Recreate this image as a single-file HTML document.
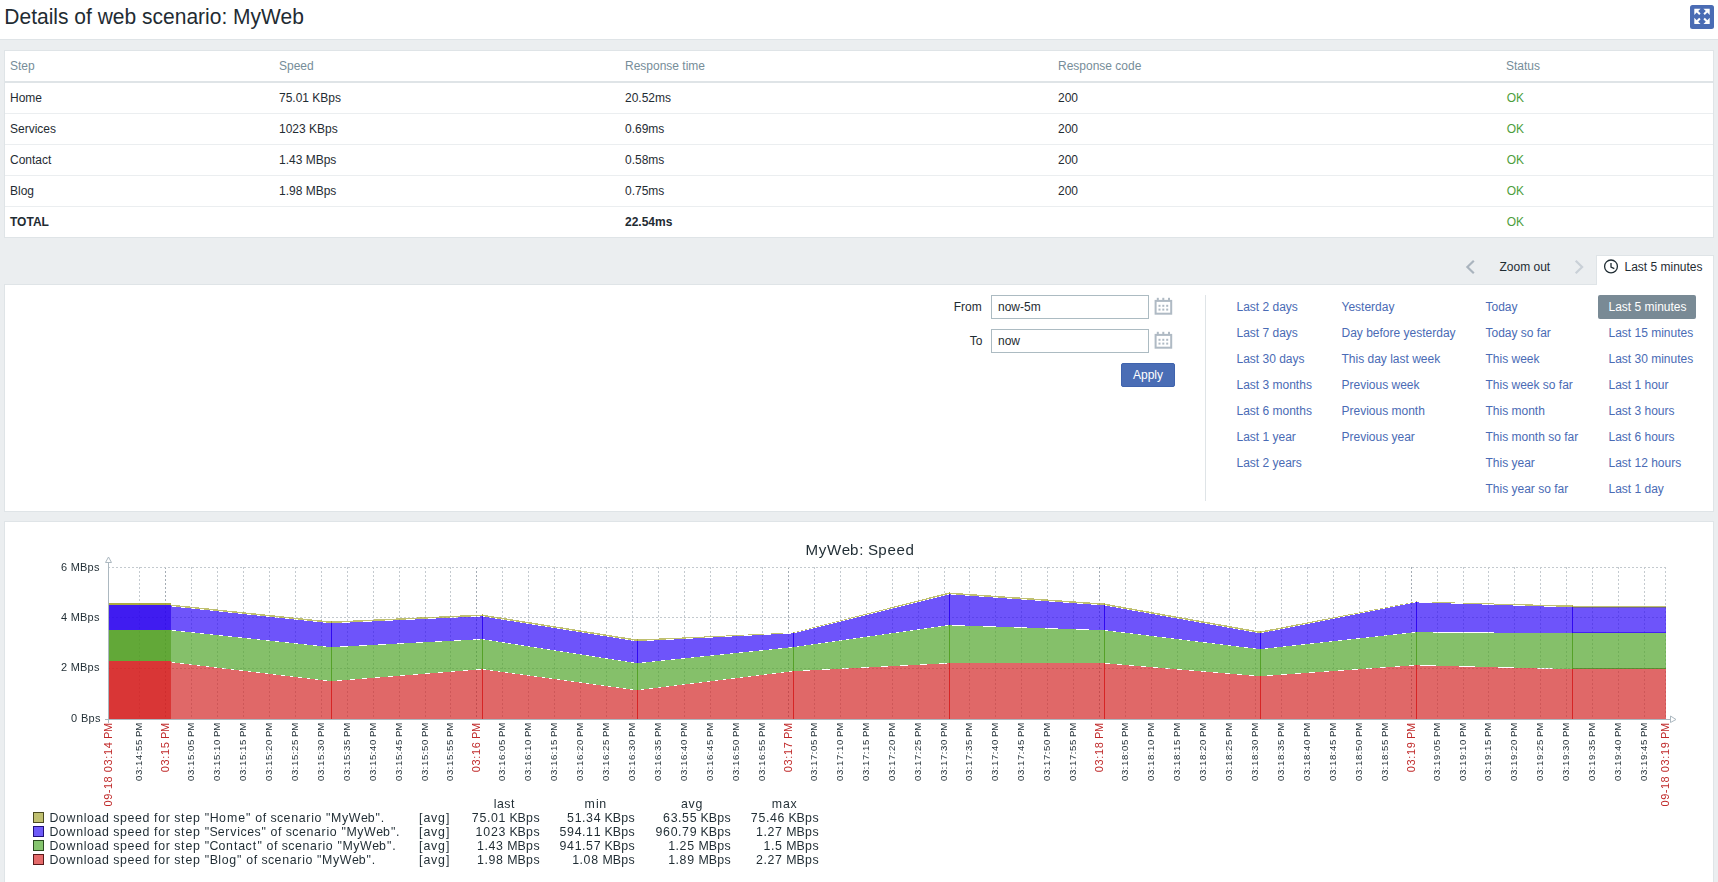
<!DOCTYPE html><html><head><meta charset="utf-8"><title>Details of web scenario: MyWeb</title><style>
*{box-sizing:border-box}
html,body{margin:0;padding:0}
body{width:1718px;height:882px;overflow:hidden;position:relative;background:#ebeef0;font-family:"Liberation Sans",sans-serif;font-size:12px;color:#1f2c33}
.a{position:absolute}
.hdr{left:0;top:0;width:1718px;height:40px;background:#fff;border-bottom:1px solid #dfe4e7}
.h1{left:4.3px;top:4.6px;transform:scaleY(1.075);transform-origin:0 20px;font-size:21px;line-height:24px;white-space:nowrap;color:#1f2c33}
.pnl{background:#fff;border:1px solid #dfe4e7}
.tx{white-space:nowrap;line-height:30px;height:30px}
.th{color:#768d99}
.ok{color:#4c9e3c}
.lnk{color:#4a6bb5;white-space:nowrap;line-height:14px}
</style></head><body>
<div class="a hdr"></div>
<div class="a h1">Details of web scenario: MyWeb</div>
<svg class="a" style="left:1690px;top:5px" width="24" height="24" viewBox="0 0 24 24"><rect x="0" y="0" width="24" height="24" rx="2.5" fill="#4a6cb4"/><g fill="#fff" transform="translate(4.3,3.7)"><polygon points="0.00,0.00 6.30,0.00 3.90,2.40 6.30,4.90 4.90,6.30 2.40,3.90 0.00,6.30"/><polygon points="15.40,0.00 9.10,0.00 11.50,2.40 9.10,4.90 10.50,6.30 13.00,3.90 15.40,6.30"/><polygon points="0.00,15.40 6.30,15.40 3.90,13.00 6.30,10.50 4.90,9.10 2.40,11.50 0.00,9.10"/><polygon points="15.40,15.40 9.10,15.40 11.50,13.00 9.10,10.50 10.50,9.10 13.00,11.50 15.40,9.10"/></g></svg>
<div class="a pnl" style="left:4px;top:50px;width:1710px;height:188px"></div>
<div class="a" style="left:5px;top:81px;width:1708px;height:2px;background:#dfe4e7"></div>
<div class="a" style="left:5px;top:113px;width:1708px;height:1px;background:#ebeef0"></div>
<div class="a" style="left:5px;top:144px;width:1708px;height:1px;background:#ebeef0"></div>
<div class="a" style="left:5px;top:175px;width:1708px;height:1px;background:#ebeef0"></div>
<div class="a" style="left:5px;top:206px;width:1708px;height:1px;background:#ebeef0"></div>
<div class="a tx th" style="left:10px;top:51px">Step</div>
<div class="a tx th" style="left:279px;top:51px">Speed</div>
<div class="a tx th" style="left:625px;top:51px">Response time</div>
<div class="a tx th" style="left:1058px;top:51px">Response code</div>
<div class="a tx th" style="left:1506px;top:51px">Status</div>
<div class="a tx" style="left:10px;top:83px">Home</div>
<div class="a tx" style="left:279px;top:83px">75.01 KBps</div>
<div class="a tx" style="left:625px;top:83px">20.52ms</div>
<div class="a tx" style="left:1058px;top:83px">200</div>
<div class="a tx ok" style="left:1506.7px;top:83px">OK</div>
<div class="a tx" style="left:10px;top:114px">Services</div>
<div class="a tx" style="left:279px;top:114px">1023 KBps</div>
<div class="a tx" style="left:625px;top:114px">0.69ms</div>
<div class="a tx" style="left:1058px;top:114px">200</div>
<div class="a tx ok" style="left:1506.7px;top:114px">OK</div>
<div class="a tx" style="left:10px;top:145px">Contact</div>
<div class="a tx" style="left:279px;top:145px">1.43 MBps</div>
<div class="a tx" style="left:625px;top:145px">0.58ms</div>
<div class="a tx" style="left:1058px;top:145px">200</div>
<div class="a tx ok" style="left:1506.7px;top:145px">OK</div>
<div class="a tx" style="left:10px;top:176px">Blog</div>
<div class="a tx" style="left:279px;top:176px">1.98 MBps</div>
<div class="a tx" style="left:625px;top:176px">0.75ms</div>
<div class="a tx" style="left:1058px;top:176px">200</div>
<div class="a tx ok" style="left:1506.7px;top:176px">OK</div>
<div class="a tx" style="left:10px;top:207px;font-weight:bold">TOTAL</div>
<div class="a tx" style="left:625px;top:207px;font-weight:bold">22.54ms</div>
<div class="a tx ok" style="left:1506.7px;top:207px">OK</div>
<div class="a pnl" style="left:4px;top:284px;width:1710px;height:228px"></div>
<div class="a" style="left:1596px;top:255px;width:118px;height:30px;background:#fff;border:1px solid #dfe4e7;border-bottom:0"></div>
<svg class="a" style="left:1462px;top:258px" width="18" height="18"><polyline points="11.8,2.8 5.4,9 11.8,15.2" fill="none" stroke="#aab4be" stroke-width="2.2"/></svg>
<svg class="a" style="left:1570px;top:258px" width="18" height="18"><polyline points="5.7,2.8 12.1,9 5.7,15.2" fill="none" stroke="#c9d0d7" stroke-width="2.2"/></svg>
<div class="a" style="left:1499.5px;top:260px;line-height:14px;white-space:nowrap">Zoom out</div>
<svg class="a" style="left:1603px;top:258px" width="17" height="17"><circle cx="8" cy="8.4" r="6.4" fill="none" stroke="#1f2c33" stroke-width="1.3"/><polyline points="8,5 8,9 11.3,10.6" fill="none" stroke="#1f2c33" stroke-width="1.3"/></svg>
<div class="a" style="left:1624.5px;top:260px;line-height:14px;white-space:nowrap">Last 5 minutes</div>
<div class="a" style="left:953.7px;top:300px;line-height:14px">From</div>
<div class="a" style="left:969.7px;top:334px;line-height:14px">To</div>
<div class="a" style="left:991px;top:295px;width:158px;height:24px;border:1px solid #acbbc2;background:#fff;padding-left:6px;line-height:22px">now-5m</div>
<svg class="a" style="left:1153px;top:296px" width="22" height="22" viewBox="0 0 22 22" fill="#afbac4"><rect x="2.6" y="4.9" width="15.6" height="12.8" fill="none" stroke="#afbac4" stroke-width="2"/><rect x="3.8" y="1.8" width="2" height="2.4"/><rect x="9.3" y="1.8" width="2" height="2.4"/><rect x="15" y="1.8" width="2" height="2.4"/><rect x="5.5" y="8.8" width="2" height="2"/><rect x="9.3" y="8.8" width="2" height="2"/><rect x="13.2" y="8.8" width="2" height="2"/><rect x="5.5" y="12.6" width="2" height="2"/><rect x="9.3" y="12.6" width="2" height="2"/><rect x="13.2" y="12.6" width="2" height="2"/></svg>
<div class="a" style="left:991px;top:329px;width:158px;height:24px;border:1px solid #acbbc2;background:#fff;padding-left:6px;line-height:22px">now</div>
<svg class="a" style="left:1153px;top:330px" width="22" height="22" viewBox="0 0 22 22" fill="#afbac4"><rect x="2.6" y="4.9" width="15.6" height="12.8" fill="none" stroke="#afbac4" stroke-width="2"/><rect x="3.8" y="1.8" width="2" height="2.4"/><rect x="9.3" y="1.8" width="2" height="2.4"/><rect x="15" y="1.8" width="2" height="2.4"/><rect x="5.5" y="8.8" width="2" height="2"/><rect x="9.3" y="8.8" width="2" height="2"/><rect x="13.2" y="8.8" width="2" height="2"/><rect x="5.5" y="12.6" width="2" height="2"/><rect x="9.3" y="12.6" width="2" height="2"/><rect x="13.2" y="12.6" width="2" height="2"/></svg>
<div class="a" style="left:1121px;top:363px;width:54px;height:24px;background:#4a6db5;border:1px solid #3f63ad;border-radius:2px;color:#fff;text-align:center;line-height:22px">Apply</div>
<div class="a" style="left:1205px;top:295px;width:1px;height:206px;background:#dfe4e7"></div>
<div class="a" style="left:1598px;top:295px;width:98px;height:24px;background:#798a95;border-radius:2px"></div>
<div class="a lnk" style="left:1236.5px;top:300px;color:#4a6bb5">Last 2 days</div>
<div class="a lnk" style="left:1236.5px;top:326px;color:#4a6bb5">Last 7 days</div>
<div class="a lnk" style="left:1236.5px;top:352px;color:#4a6bb5">Last 30 days</div>
<div class="a lnk" style="left:1236.5px;top:378px;color:#4a6bb5">Last 3 months</div>
<div class="a lnk" style="left:1236.5px;top:404px;color:#4a6bb5">Last 6 months</div>
<div class="a lnk" style="left:1236.5px;top:430px;color:#4a6bb5">Last 1 year</div>
<div class="a lnk" style="left:1236.5px;top:456px;color:#4a6bb5">Last 2 years</div>
<div class="a lnk" style="left:1341.5px;top:300px;color:#4a6bb5">Yesterday</div>
<div class="a lnk" style="left:1341.5px;top:326px;color:#4a6bb5">Day before yesterday</div>
<div class="a lnk" style="left:1341.5px;top:352px;color:#4a6bb5">This day last week</div>
<div class="a lnk" style="left:1341.5px;top:378px;color:#4a6bb5">Previous week</div>
<div class="a lnk" style="left:1341.5px;top:404px;color:#4a6bb5">Previous month</div>
<div class="a lnk" style="left:1341.5px;top:430px;color:#4a6bb5">Previous year</div>
<div class="a lnk" style="left:1485.5px;top:300px;color:#4a6bb5">Today</div>
<div class="a lnk" style="left:1485.5px;top:326px;color:#4a6bb5">Today so far</div>
<div class="a lnk" style="left:1485.5px;top:352px;color:#4a6bb5">This week</div>
<div class="a lnk" style="left:1485.5px;top:378px;color:#4a6bb5">This week so far</div>
<div class="a lnk" style="left:1485.5px;top:404px;color:#4a6bb5">This month</div>
<div class="a lnk" style="left:1485.5px;top:430px;color:#4a6bb5">This month so far</div>
<div class="a lnk" style="left:1485.5px;top:456px;color:#4a6bb5">This year</div>
<div class="a lnk" style="left:1485.5px;top:482px;color:#4a6bb5">This year so far</div>
<div class="a lnk" style="left:1608.5px;top:300px;color:#fff">Last 5 minutes</div>
<div class="a lnk" style="left:1608.5px;top:326px;color:#4a6bb5">Last 15 minutes</div>
<div class="a lnk" style="left:1608.5px;top:352px;color:#4a6bb5">Last 30 minutes</div>
<div class="a lnk" style="left:1608.5px;top:378px;color:#4a6bb5">Last 1 hour</div>
<div class="a lnk" style="left:1608.5px;top:404px;color:#4a6bb5">Last 3 hours</div>
<div class="a lnk" style="left:1608.5px;top:430px;color:#4a6bb5">Last 6 hours</div>
<div class="a lnk" style="left:1608.5px;top:456px;color:#4a6bb5">Last 12 hours</div>
<div class="a lnk" style="left:1608.5px;top:482px;color:#4a6bb5">Last 1 day</div>
<div class="a pnl" style="left:4px;top:521px;width:1710px;height:400px"></div>
<svg class="a" style="left:0;top:521px" width="1718" height="361" viewBox="0 521 1718 361" shape-rendering="crispEdges">
<line x1="139.5" y1="567" x2="139.5" y2="719" stroke="#c4cacf" stroke-width="1" stroke-dasharray="2,2"/>
<line x1="165.5" y1="567" x2="165.5" y2="719" stroke="#a4acb4" stroke-width="1" stroke-dasharray="2,2"/>
<line x1="191.5" y1="567" x2="191.5" y2="719" stroke="#c4cacf" stroke-width="1" stroke-dasharray="2,2"/>
<line x1="217.5" y1="567" x2="217.5" y2="719" stroke="#c4cacf" stroke-width="1" stroke-dasharray="2,2"/>
<line x1="243.5" y1="567" x2="243.5" y2="719" stroke="#c4cacf" stroke-width="1" stroke-dasharray="2,2"/>
<line x1="269.5" y1="567" x2="269.5" y2="719" stroke="#c4cacf" stroke-width="1" stroke-dasharray="2,2"/>
<line x1="295.5" y1="567" x2="295.5" y2="719" stroke="#c4cacf" stroke-width="1" stroke-dasharray="2,2"/>
<line x1="321.5" y1="567" x2="321.5" y2="719" stroke="#c4cacf" stroke-width="1" stroke-dasharray="2,2"/>
<line x1="347.5" y1="567" x2="347.5" y2="719" stroke="#c4cacf" stroke-width="1" stroke-dasharray="2,2"/>
<line x1="373.5" y1="567" x2="373.5" y2="719" stroke="#c4cacf" stroke-width="1" stroke-dasharray="2,2"/>
<line x1="399.5" y1="567" x2="399.5" y2="719" stroke="#c4cacf" stroke-width="1" stroke-dasharray="2,2"/>
<line x1="425.5" y1="567" x2="425.5" y2="719" stroke="#c4cacf" stroke-width="1" stroke-dasharray="2,2"/>
<line x1="450.5" y1="567" x2="450.5" y2="719" stroke="#c4cacf" stroke-width="1" stroke-dasharray="2,2"/>
<line x1="476.5" y1="567" x2="476.5" y2="719" stroke="#a4acb4" stroke-width="1" stroke-dasharray="2,2"/>
<line x1="502.5" y1="567" x2="502.5" y2="719" stroke="#c4cacf" stroke-width="1" stroke-dasharray="2,2"/>
<line x1="528.5" y1="567" x2="528.5" y2="719" stroke="#c4cacf" stroke-width="1" stroke-dasharray="2,2"/>
<line x1="554.5" y1="567" x2="554.5" y2="719" stroke="#c4cacf" stroke-width="1" stroke-dasharray="2,2"/>
<line x1="580.5" y1="567" x2="580.5" y2="719" stroke="#c4cacf" stroke-width="1" stroke-dasharray="2,2"/>
<line x1="606.5" y1="567" x2="606.5" y2="719" stroke="#c4cacf" stroke-width="1" stroke-dasharray="2,2"/>
<line x1="632.5" y1="567" x2="632.5" y2="719" stroke="#c4cacf" stroke-width="1" stroke-dasharray="2,2"/>
<line x1="658.5" y1="567" x2="658.5" y2="719" stroke="#c4cacf" stroke-width="1" stroke-dasharray="2,2"/>
<line x1="684.5" y1="567" x2="684.5" y2="719" stroke="#c4cacf" stroke-width="1" stroke-dasharray="2,2"/>
<line x1="710.5" y1="567" x2="710.5" y2="719" stroke="#c4cacf" stroke-width="1" stroke-dasharray="2,2"/>
<line x1="736.5" y1="567" x2="736.5" y2="719" stroke="#c4cacf" stroke-width="1" stroke-dasharray="2,2"/>
<line x1="762.5" y1="567" x2="762.5" y2="719" stroke="#c4cacf" stroke-width="1" stroke-dasharray="2,2"/>
<line x1="788.5" y1="567" x2="788.5" y2="719" stroke="#a4acb4" stroke-width="1" stroke-dasharray="2,2"/>
<line x1="814.5" y1="567" x2="814.5" y2="719" stroke="#c4cacf" stroke-width="1" stroke-dasharray="2,2"/>
<line x1="840.5" y1="567" x2="840.5" y2="719" stroke="#c4cacf" stroke-width="1" stroke-dasharray="2,2"/>
<line x1="866.5" y1="567" x2="866.5" y2="719" stroke="#c4cacf" stroke-width="1" stroke-dasharray="2,2"/>
<line x1="892.5" y1="567" x2="892.5" y2="719" stroke="#c4cacf" stroke-width="1" stroke-dasharray="2,2"/>
<line x1="918.5" y1="567" x2="918.5" y2="719" stroke="#c4cacf" stroke-width="1" stroke-dasharray="2,2"/>
<line x1="944.5" y1="567" x2="944.5" y2="719" stroke="#c4cacf" stroke-width="1" stroke-dasharray="2,2"/>
<line x1="969.5" y1="567" x2="969.5" y2="719" stroke="#c4cacf" stroke-width="1" stroke-dasharray="2,2"/>
<line x1="995.5" y1="567" x2="995.5" y2="719" stroke="#c4cacf" stroke-width="1" stroke-dasharray="2,2"/>
<line x1="1021.5" y1="567" x2="1021.5" y2="719" stroke="#c4cacf" stroke-width="1" stroke-dasharray="2,2"/>
<line x1="1047.5" y1="567" x2="1047.5" y2="719" stroke="#c4cacf" stroke-width="1" stroke-dasharray="2,2"/>
<line x1="1073.5" y1="567" x2="1073.5" y2="719" stroke="#c4cacf" stroke-width="1" stroke-dasharray="2,2"/>
<line x1="1099.5" y1="567" x2="1099.5" y2="719" stroke="#a4acb4" stroke-width="1" stroke-dasharray="2,2"/>
<line x1="1125.5" y1="567" x2="1125.5" y2="719" stroke="#c4cacf" stroke-width="1" stroke-dasharray="2,2"/>
<line x1="1151.5" y1="567" x2="1151.5" y2="719" stroke="#c4cacf" stroke-width="1" stroke-dasharray="2,2"/>
<line x1="1177.5" y1="567" x2="1177.5" y2="719" stroke="#c4cacf" stroke-width="1" stroke-dasharray="2,2"/>
<line x1="1203.5" y1="567" x2="1203.5" y2="719" stroke="#c4cacf" stroke-width="1" stroke-dasharray="2,2"/>
<line x1="1229.5" y1="567" x2="1229.5" y2="719" stroke="#c4cacf" stroke-width="1" stroke-dasharray="2,2"/>
<line x1="1255.5" y1="567" x2="1255.5" y2="719" stroke="#c4cacf" stroke-width="1" stroke-dasharray="2,2"/>
<line x1="1281.5" y1="567" x2="1281.5" y2="719" stroke="#c4cacf" stroke-width="1" stroke-dasharray="2,2"/>
<line x1="1307.5" y1="567" x2="1307.5" y2="719" stroke="#c4cacf" stroke-width="1" stroke-dasharray="2,2"/>
<line x1="1333.5" y1="567" x2="1333.5" y2="719" stroke="#c4cacf" stroke-width="1" stroke-dasharray="2,2"/>
<line x1="1359.5" y1="567" x2="1359.5" y2="719" stroke="#c4cacf" stroke-width="1" stroke-dasharray="2,2"/>
<line x1="1385.5" y1="567" x2="1385.5" y2="719" stroke="#c4cacf" stroke-width="1" stroke-dasharray="2,2"/>
<line x1="1411.5" y1="567" x2="1411.5" y2="719" stroke="#a4acb4" stroke-width="1" stroke-dasharray="2,2"/>
<line x1="1437.5" y1="567" x2="1437.5" y2="719" stroke="#c4cacf" stroke-width="1" stroke-dasharray="2,2"/>
<line x1="1463.5" y1="567" x2="1463.5" y2="719" stroke="#c4cacf" stroke-width="1" stroke-dasharray="2,2"/>
<line x1="1488.5" y1="567" x2="1488.5" y2="719" stroke="#c4cacf" stroke-width="1" stroke-dasharray="2,2"/>
<line x1="1514.5" y1="567" x2="1514.5" y2="719" stroke="#c4cacf" stroke-width="1" stroke-dasharray="2,2"/>
<line x1="1540.5" y1="567" x2="1540.5" y2="719" stroke="#c4cacf" stroke-width="1" stroke-dasharray="2,2"/>
<line x1="1566.5" y1="567" x2="1566.5" y2="719" stroke="#c4cacf" stroke-width="1" stroke-dasharray="2,2"/>
<line x1="1592.5" y1="567" x2="1592.5" y2="719" stroke="#c4cacf" stroke-width="1" stroke-dasharray="2,2"/>
<line x1="1618.5" y1="567" x2="1618.5" y2="719" stroke="#c4cacf" stroke-width="1" stroke-dasharray="2,2"/>
<line x1="1644.5" y1="567" x2="1644.5" y2="719" stroke="#c4cacf" stroke-width="1" stroke-dasharray="2,2"/>
<line x1="1665.5" y1="567" x2="1665.5" y2="719" stroke="#c4cacf" stroke-width="1" stroke-dasharray="2,2"/>
<line x1="108" y1="567.5" x2="1666" y2="567.5" stroke="#c4cacf" stroke-width="1" stroke-dasharray="2,2"/>
<line x1="108" y1="617.5" x2="1666" y2="617.5" stroke="#c4cacf" stroke-width="1" stroke-dasharray="2,2"/>
<line x1="108" y1="668.5" x2="1666" y2="668.5" stroke="#c4cacf" stroke-width="1" stroke-dasharray="2,2"/>
<polygon points="171,662.4 331,681.4 482,669.4 637,690.4 793,671.4 949,663.4 1104,663.4 1260,676.4 1416,665.4 1572,669.4 1666,669.4 1666,719 171,719" fill="#d11e1e" fill-opacity="0.67"/>
<polygon points="171,630.4 331,647.4 482,639.4 637,663.4 793,647.4 949,625.4 1104,630.4 1260,649.4 1416,632.4 1572,633.4 1666,633.4 1666,669 1572,669 1416,665 1260,676 1104,663 949,663 793,671 637,690 482,669 331,681 171,662" fill="#49a121" fill-opacity="0.67"/>
<polygon points="171,606.4 331,623.4 482,616.4 637,641.4 793,633.4 949,594.4 1104,605.4 1260,633.4 1416,602.4 1572,607.4 1666,607.4 1666,633 1572,633 1416,632 1260,649 1104,630 949,625 793,647 637,663 482,639 331,647 171,630" fill="#2700f8" fill-opacity="0.67"/>
<polygon points="171,604.5 331,621.5 482,614.5 637,639.5 793,632.5 949,592.5 1104,603.5 1260,631.5 1416,601.5 1572,605.5 1666,605.5 1666,607 1572,607 1416,602 1260,633 1104,605 949,594 793,633 637,641 482,616 331,623 171,606" fill="#a1a12a" fill-opacity="0.67"/>
<rect x="108" y="603" width="63" height="2" fill="#a2a229" fill-opacity="0.891"/>
<rect x="108" y="605" width="63" height="25" fill="#2900ee" fill-opacity="0.891"/>
<rect x="108" y="630" width="63" height="31" fill="#4f9d1f" fill-opacity="0.891"/>
<rect x="108" y="661" width="63" height="58" fill="#d41d1d" fill-opacity="0.891"/>
<rect x="1572" y="607" width="94" height="1" fill="#6a6a40" fill-opacity="0.5"/>
<rect x="1572" y="632" width="94" height="1" fill="#2900ee" fill-opacity="0.6"/>
<rect x="1572" y="668" width="94" height="1" fill="#4a7a20" fill-opacity="0.7"/>
<rect x="331" y="621" width="1" height="2" fill="#a2a229" fill-opacity="0.891"/>
<rect x="331" y="623" width="1" height="24" fill="#2900ee" fill-opacity="0.891"/>
<rect x="331" y="647" width="1" height="34" fill="#4f9d1f" fill-opacity="0.891"/>
<rect x="331" y="681" width="1" height="38" fill="#d41d1d" fill-opacity="0.891"/>
<rect x="482" y="614" width="1" height="2" fill="#a2a229" fill-opacity="0.891"/>
<rect x="482" y="616" width="1" height="23" fill="#2900ee" fill-opacity="0.891"/>
<rect x="482" y="639" width="1" height="30" fill="#4f9d1f" fill-opacity="0.891"/>
<rect x="482" y="669" width="1" height="50" fill="#d41d1d" fill-opacity="0.891"/>
<rect x="637" y="639" width="1" height="2" fill="#a2a229" fill-opacity="0.891"/>
<rect x="637" y="641" width="1" height="22" fill="#2900ee" fill-opacity="0.891"/>
<rect x="637" y="663" width="1" height="27" fill="#4f9d1f" fill-opacity="0.891"/>
<rect x="637" y="690" width="1" height="29" fill="#d41d1d" fill-opacity="0.891"/>
<rect x="793" y="632" width="1" height="1" fill="#a2a229" fill-opacity="0.891"/>
<rect x="793" y="633" width="1" height="14" fill="#2900ee" fill-opacity="0.891"/>
<rect x="793" y="647" width="1" height="24" fill="#4f9d1f" fill-opacity="0.891"/>
<rect x="793" y="671" width="1" height="48" fill="#d41d1d" fill-opacity="0.891"/>
<rect x="949" y="592" width="1" height="2" fill="#a2a229" fill-opacity="0.891"/>
<rect x="949" y="594" width="1" height="31" fill="#2900ee" fill-opacity="0.891"/>
<rect x="949" y="625" width="1" height="38" fill="#4f9d1f" fill-opacity="0.891"/>
<rect x="949" y="663" width="1" height="56" fill="#d41d1d" fill-opacity="0.891"/>
<rect x="1104" y="603" width="1" height="2" fill="#a2a229" fill-opacity="0.891"/>
<rect x="1104" y="605" width="1" height="25" fill="#2900ee" fill-opacity="0.891"/>
<rect x="1104" y="630" width="1" height="33" fill="#4f9d1f" fill-opacity="0.891"/>
<rect x="1104" y="663" width="1" height="56" fill="#d41d1d" fill-opacity="0.891"/>
<rect x="1260" y="631" width="1" height="2" fill="#a2a229" fill-opacity="0.891"/>
<rect x="1260" y="633" width="1" height="16" fill="#2900ee" fill-opacity="0.891"/>
<rect x="1260" y="649" width="1" height="27" fill="#4f9d1f" fill-opacity="0.891"/>
<rect x="1260" y="676" width="1" height="43" fill="#d41d1d" fill-opacity="0.891"/>
<rect x="1416" y="601" width="1" height="1" fill="#a2a229" fill-opacity="0.891"/>
<rect x="1416" y="602" width="1" height="30" fill="#2900ee" fill-opacity="0.891"/>
<rect x="1416" y="632" width="1" height="33" fill="#4f9d1f" fill-opacity="0.891"/>
<rect x="1416" y="665" width="1" height="54" fill="#d41d1d" fill-opacity="0.891"/>
<rect x="1572" y="605" width="1" height="2" fill="#a2a229" fill-opacity="0.891"/>
<rect x="1572" y="607" width="1" height="26" fill="#2900ee" fill-opacity="0.891"/>
<rect x="1572" y="633" width="1" height="36" fill="#4f9d1f" fill-opacity="0.891"/>
<rect x="1572" y="669" width="1" height="50" fill="#d41d1d" fill-opacity="0.891"/>
<rect x="108" y="562" width="1" height="158" fill="#acb8c0"/>
<rect x="105" y="719" width="1566" height="1" fill="#acb8c0"/>
<rect x="108" y="719" width="1" height="4" fill="#acb8c0"/>
<polygon points="105.5,562.5 111.5,562.5 108.5,557" fill="#fff" stroke="#acb8c0" stroke-width="1" shape-rendering="geometricPrecision"/>
<polygon points="1670.5,716 1670.5,722.5 1676,719.5" fill="#fff" stroke="#acb8c0" stroke-width="1" shape-rendering="geometricPrecision"/>
</svg>
<svg class="a" style="left:0;top:521px;will-change:transform" width="1718" height="361" viewBox="0 521 1718 361" font-family="Liberation Sans, sans-serif">
<text x="805.6 818.8 827.0 841.7 850.0 859.2 864.0 868.1 878.2 887.4 896.4 905.5" y="555.00" font-size="15.11" fill="#1f2c33">MyWeb: Speed</text>
<text x="61.0 67.6 70.8 80.0 87.6 94.1" y="571.00" font-size="10.99" fill="#1f2c33">6 MBps</text>
<text x="61.0 67.6 70.8 80.0 87.6 94.1" y="621.00" font-size="10.99" fill="#1f2c33">4 MBps</text>
<text x="61.0 67.6 70.8 80.0 87.6 94.1" y="671.00" font-size="10.99" fill="#1f2c33">2 MBps</text>
<text x="71.1 77.8 81.0 88.6 95.1" y="722.00" font-size="10.99" fill="#1f2c33">0 Bps</text>
<text transform="translate(112.20,722.8) rotate(-90)" x="-83.7 -77.0 -70.4 -66.3 -59.6 -52.9 -49.4 -42.6 -35.9 -32.2 -25.4 -18.8 -16.1 -9.2" y="0" font-size="10.99" fill="#c02a2a">09-18 03:14 PM</text>
<text transform="translate(1669.20,722.8) rotate(-90)" x="-83.7 -77.0 -70.4 -66.3 -59.6 -52.9 -49.4 -42.6 -35.9 -32.2 -25.4 -18.8 -16.1 -9.2" y="0" font-size="10.99" fill="#c02a2a">09-18 03:19 PM</text>
<text transform="translate(142.00,722.8) rotate(-90)" x="-58.2 -52.3 -46.4 -43.2 -37.3 -31.4 -28.2 -22.3 -16.5 -14.1 -8.0" y="0" font-size="9.61" fill="#1f2c33">03:14:55 PM</text>
<text transform="translate(169.20,722.8) rotate(-90)" x="-49.4 -42.6 -35.9 -32.2 -25.4 -18.8 -16.1 -9.2" y="0" font-size="10.99" fill="#c02a2a">03:15 PM</text>
<text transform="translate(194.00,722.8) rotate(-90)" x="-58.2 -52.3 -46.4 -43.2 -37.3 -31.4 -28.2 -22.3 -16.5 -14.1 -8.0" y="0" font-size="9.61" fill="#1f2c33">03:15:05 PM</text>
<text transform="translate(220.00,722.8) rotate(-90)" x="-58.2 -52.3 -46.4 -43.2 -37.3 -31.4 -28.2 -22.3 -16.5 -14.1 -8.0" y="0" font-size="9.61" fill="#1f2c33">03:15:10 PM</text>
<text transform="translate(246.00,722.8) rotate(-90)" x="-58.2 -52.3 -46.4 -43.2 -37.3 -31.4 -28.2 -22.3 -16.5 -14.1 -8.0" y="0" font-size="9.61" fill="#1f2c33">03:15:15 PM</text>
<text transform="translate(272.00,722.8) rotate(-90)" x="-58.2 -52.3 -46.4 -43.2 -37.3 -31.4 -28.2 -22.3 -16.5 -14.1 -8.0" y="0" font-size="9.61" fill="#1f2c33">03:15:20 PM</text>
<text transform="translate(298.00,722.8) rotate(-90)" x="-58.2 -52.3 -46.4 -43.2 -37.3 -31.4 -28.2 -22.3 -16.5 -14.1 -8.0" y="0" font-size="9.61" fill="#1f2c33">03:15:25 PM</text>
<text transform="translate(324.00,722.8) rotate(-90)" x="-58.2 -52.3 -46.4 -43.2 -37.3 -31.4 -28.2 -22.3 -16.5 -14.1 -8.0" y="0" font-size="9.61" fill="#1f2c33">03:15:30 PM</text>
<text transform="translate(350.00,722.8) rotate(-90)" x="-58.2 -52.3 -46.4 -43.2 -37.3 -31.4 -28.2 -22.3 -16.5 -14.1 -8.0" y="0" font-size="9.61" fill="#1f2c33">03:15:35 PM</text>
<text transform="translate(376.00,722.8) rotate(-90)" x="-58.2 -52.3 -46.4 -43.2 -37.3 -31.4 -28.2 -22.3 -16.5 -14.1 -8.0" y="0" font-size="9.61" fill="#1f2c33">03:15:40 PM</text>
<text transform="translate(402.00,722.8) rotate(-90)" x="-58.2 -52.3 -46.4 -43.2 -37.3 -31.4 -28.2 -22.3 -16.5 -14.1 -8.0" y="0" font-size="9.61" fill="#1f2c33">03:15:45 PM</text>
<text transform="translate(428.00,722.8) rotate(-90)" x="-58.2 -52.3 -46.4 -43.2 -37.3 -31.4 -28.2 -22.3 -16.5 -14.1 -8.0" y="0" font-size="9.61" fill="#1f2c33">03:15:50 PM</text>
<text transform="translate(453.00,722.8) rotate(-90)" x="-58.2 -52.3 -46.4 -43.2 -37.3 -31.4 -28.2 -22.3 -16.5 -14.1 -8.0" y="0" font-size="9.61" fill="#1f2c33">03:15:55 PM</text>
<text transform="translate(480.20,722.8) rotate(-90)" x="-49.4 -42.6 -35.9 -32.2 -25.4 -18.8 -16.1 -9.2" y="0" font-size="10.99" fill="#c02a2a">03:16 PM</text>
<text transform="translate(505.00,722.8) rotate(-90)" x="-58.2 -52.3 -46.4 -43.2 -37.3 -31.4 -28.2 -22.3 -16.5 -14.1 -8.0" y="0" font-size="9.61" fill="#1f2c33">03:16:05 PM</text>
<text transform="translate(531.00,722.8) rotate(-90)" x="-58.2 -52.3 -46.4 -43.2 -37.3 -31.4 -28.2 -22.3 -16.5 -14.1 -8.0" y="0" font-size="9.61" fill="#1f2c33">03:16:10 PM</text>
<text transform="translate(557.00,722.8) rotate(-90)" x="-58.2 -52.3 -46.4 -43.2 -37.3 -31.4 -28.2 -22.3 -16.5 -14.1 -8.0" y="0" font-size="9.61" fill="#1f2c33">03:16:15 PM</text>
<text transform="translate(583.00,722.8) rotate(-90)" x="-58.2 -52.3 -46.4 -43.2 -37.3 -31.4 -28.2 -22.3 -16.5 -14.1 -8.0" y="0" font-size="9.61" fill="#1f2c33">03:16:20 PM</text>
<text transform="translate(609.00,722.8) rotate(-90)" x="-58.2 -52.3 -46.4 -43.2 -37.3 -31.4 -28.2 -22.3 -16.5 -14.1 -8.0" y="0" font-size="9.61" fill="#1f2c33">03:16:25 PM</text>
<text transform="translate(635.00,722.8) rotate(-90)" x="-58.2 -52.3 -46.4 -43.2 -37.3 -31.4 -28.2 -22.3 -16.5 -14.1 -8.0" y="0" font-size="9.61" fill="#1f2c33">03:16:30 PM</text>
<text transform="translate(661.00,722.8) rotate(-90)" x="-58.2 -52.3 -46.4 -43.2 -37.3 -31.4 -28.2 -22.3 -16.5 -14.1 -8.0" y="0" font-size="9.61" fill="#1f2c33">03:16:35 PM</text>
<text transform="translate(687.00,722.8) rotate(-90)" x="-58.2 -52.3 -46.4 -43.2 -37.3 -31.4 -28.2 -22.3 -16.5 -14.1 -8.0" y="0" font-size="9.61" fill="#1f2c33">03:16:40 PM</text>
<text transform="translate(713.00,722.8) rotate(-90)" x="-58.2 -52.3 -46.4 -43.2 -37.3 -31.4 -28.2 -22.3 -16.5 -14.1 -8.0" y="0" font-size="9.61" fill="#1f2c33">03:16:45 PM</text>
<text transform="translate(739.00,722.8) rotate(-90)" x="-58.2 -52.3 -46.4 -43.2 -37.3 -31.4 -28.2 -22.3 -16.5 -14.1 -8.0" y="0" font-size="9.61" fill="#1f2c33">03:16:50 PM</text>
<text transform="translate(765.00,722.8) rotate(-90)" x="-58.2 -52.3 -46.4 -43.2 -37.3 -31.4 -28.2 -22.3 -16.5 -14.1 -8.0" y="0" font-size="9.61" fill="#1f2c33">03:16:55 PM</text>
<text transform="translate(792.20,722.8) rotate(-90)" x="-49.4 -42.6 -35.9 -32.2 -25.4 -18.8 -16.1 -9.2" y="0" font-size="10.99" fill="#c02a2a">03:17 PM</text>
<text transform="translate(817.00,722.8) rotate(-90)" x="-58.2 -52.3 -46.4 -43.2 -37.3 -31.4 -28.2 -22.3 -16.5 -14.1 -8.0" y="0" font-size="9.61" fill="#1f2c33">03:17:05 PM</text>
<text transform="translate(843.00,722.8) rotate(-90)" x="-58.2 -52.3 -46.4 -43.2 -37.3 -31.4 -28.2 -22.3 -16.5 -14.1 -8.0" y="0" font-size="9.61" fill="#1f2c33">03:17:10 PM</text>
<text transform="translate(869.00,722.8) rotate(-90)" x="-58.2 -52.3 -46.4 -43.2 -37.3 -31.4 -28.2 -22.3 -16.5 -14.1 -8.0" y="0" font-size="9.61" fill="#1f2c33">03:17:15 PM</text>
<text transform="translate(895.00,722.8) rotate(-90)" x="-58.2 -52.3 -46.4 -43.2 -37.3 -31.4 -28.2 -22.3 -16.5 -14.1 -8.0" y="0" font-size="9.61" fill="#1f2c33">03:17:20 PM</text>
<text transform="translate(921.00,722.8) rotate(-90)" x="-58.2 -52.3 -46.4 -43.2 -37.3 -31.4 -28.2 -22.3 -16.5 -14.1 -8.0" y="0" font-size="9.61" fill="#1f2c33">03:17:25 PM</text>
<text transform="translate(947.00,722.8) rotate(-90)" x="-58.2 -52.3 -46.4 -43.2 -37.3 -31.4 -28.2 -22.3 -16.5 -14.1 -8.0" y="0" font-size="9.61" fill="#1f2c33">03:17:30 PM</text>
<text transform="translate(972.00,722.8) rotate(-90)" x="-58.2 -52.3 -46.4 -43.2 -37.3 -31.4 -28.2 -22.3 -16.5 -14.1 -8.0" y="0" font-size="9.61" fill="#1f2c33">03:17:35 PM</text>
<text transform="translate(998.00,722.8) rotate(-90)" x="-58.2 -52.3 -46.4 -43.2 -37.3 -31.4 -28.2 -22.3 -16.5 -14.1 -8.0" y="0" font-size="9.61" fill="#1f2c33">03:17:40 PM</text>
<text transform="translate(1024.00,722.8) rotate(-90)" x="-58.2 -52.3 -46.4 -43.2 -37.3 -31.4 -28.2 -22.3 -16.5 -14.1 -8.0" y="0" font-size="9.61" fill="#1f2c33">03:17:45 PM</text>
<text transform="translate(1050.00,722.8) rotate(-90)" x="-58.2 -52.3 -46.4 -43.2 -37.3 -31.4 -28.2 -22.3 -16.5 -14.1 -8.0" y="0" font-size="9.61" fill="#1f2c33">03:17:50 PM</text>
<text transform="translate(1076.00,722.8) rotate(-90)" x="-58.2 -52.3 -46.4 -43.2 -37.3 -31.4 -28.2 -22.3 -16.5 -14.1 -8.0" y="0" font-size="9.61" fill="#1f2c33">03:17:55 PM</text>
<text transform="translate(1103.20,722.8) rotate(-90)" x="-49.4 -42.6 -35.9 -32.2 -25.4 -18.8 -16.1 -9.2" y="0" font-size="10.99" fill="#c02a2a">03:18 PM</text>
<text transform="translate(1128.00,722.8) rotate(-90)" x="-58.2 -52.3 -46.4 -43.2 -37.3 -31.4 -28.2 -22.3 -16.5 -14.1 -8.0" y="0" font-size="9.61" fill="#1f2c33">03:18:05 PM</text>
<text transform="translate(1154.00,722.8) rotate(-90)" x="-58.2 -52.3 -46.4 -43.2 -37.3 -31.4 -28.2 -22.3 -16.5 -14.1 -8.0" y="0" font-size="9.61" fill="#1f2c33">03:18:10 PM</text>
<text transform="translate(1180.00,722.8) rotate(-90)" x="-58.2 -52.3 -46.4 -43.2 -37.3 -31.4 -28.2 -22.3 -16.5 -14.1 -8.0" y="0" font-size="9.61" fill="#1f2c33">03:18:15 PM</text>
<text transform="translate(1206.00,722.8) rotate(-90)" x="-58.2 -52.3 -46.4 -43.2 -37.3 -31.4 -28.2 -22.3 -16.5 -14.1 -8.0" y="0" font-size="9.61" fill="#1f2c33">03:18:20 PM</text>
<text transform="translate(1232.00,722.8) rotate(-90)" x="-58.2 -52.3 -46.4 -43.2 -37.3 -31.4 -28.2 -22.3 -16.5 -14.1 -8.0" y="0" font-size="9.61" fill="#1f2c33">03:18:25 PM</text>
<text transform="translate(1258.00,722.8) rotate(-90)" x="-58.2 -52.3 -46.4 -43.2 -37.3 -31.4 -28.2 -22.3 -16.5 -14.1 -8.0" y="0" font-size="9.61" fill="#1f2c33">03:18:30 PM</text>
<text transform="translate(1284.00,722.8) rotate(-90)" x="-58.2 -52.3 -46.4 -43.2 -37.3 -31.4 -28.2 -22.3 -16.5 -14.1 -8.0" y="0" font-size="9.61" fill="#1f2c33">03:18:35 PM</text>
<text transform="translate(1310.00,722.8) rotate(-90)" x="-58.2 -52.3 -46.4 -43.2 -37.3 -31.4 -28.2 -22.3 -16.5 -14.1 -8.0" y="0" font-size="9.61" fill="#1f2c33">03:18:40 PM</text>
<text transform="translate(1336.00,722.8) rotate(-90)" x="-58.2 -52.3 -46.4 -43.2 -37.3 -31.4 -28.2 -22.3 -16.5 -14.1 -8.0" y="0" font-size="9.61" fill="#1f2c33">03:18:45 PM</text>
<text transform="translate(1362.00,722.8) rotate(-90)" x="-58.2 -52.3 -46.4 -43.2 -37.3 -31.4 -28.2 -22.3 -16.5 -14.1 -8.0" y="0" font-size="9.61" fill="#1f2c33">03:18:50 PM</text>
<text transform="translate(1388.00,722.8) rotate(-90)" x="-58.2 -52.3 -46.4 -43.2 -37.3 -31.4 -28.2 -22.3 -16.5 -14.1 -8.0" y="0" font-size="9.61" fill="#1f2c33">03:18:55 PM</text>
<text transform="translate(1415.20,722.8) rotate(-90)" x="-49.4 -42.6 -35.9 -32.2 -25.4 -18.8 -16.1 -9.2" y="0" font-size="10.99" fill="#c02a2a">03:19 PM</text>
<text transform="translate(1440.00,722.8) rotate(-90)" x="-58.2 -52.3 -46.4 -43.2 -37.3 -31.4 -28.2 -22.3 -16.5 -14.1 -8.0" y="0" font-size="9.61" fill="#1f2c33">03:19:05 PM</text>
<text transform="translate(1466.00,722.8) rotate(-90)" x="-58.2 -52.3 -46.4 -43.2 -37.3 -31.4 -28.2 -22.3 -16.5 -14.1 -8.0" y="0" font-size="9.61" fill="#1f2c33">03:19:10 PM</text>
<text transform="translate(1491.00,722.8) rotate(-90)" x="-58.2 -52.3 -46.4 -43.2 -37.3 -31.4 -28.2 -22.3 -16.5 -14.1 -8.0" y="0" font-size="9.61" fill="#1f2c33">03:19:15 PM</text>
<text transform="translate(1517.00,722.8) rotate(-90)" x="-58.2 -52.3 -46.4 -43.2 -37.3 -31.4 -28.2 -22.3 -16.5 -14.1 -8.0" y="0" font-size="9.61" fill="#1f2c33">03:19:20 PM</text>
<text transform="translate(1543.00,722.8) rotate(-90)" x="-58.2 -52.3 -46.4 -43.2 -37.3 -31.4 -28.2 -22.3 -16.5 -14.1 -8.0" y="0" font-size="9.61" fill="#1f2c33">03:19:25 PM</text>
<text transform="translate(1569.00,722.8) rotate(-90)" x="-58.2 -52.3 -46.4 -43.2 -37.3 -31.4 -28.2 -22.3 -16.5 -14.1 -8.0" y="0" font-size="9.61" fill="#1f2c33">03:19:30 PM</text>
<text transform="translate(1595.00,722.8) rotate(-90)" x="-58.2 -52.3 -46.4 -43.2 -37.3 -31.4 -28.2 -22.3 -16.5 -14.1 -8.0" y="0" font-size="9.61" fill="#1f2c33">03:19:35 PM</text>
<text transform="translate(1621.00,722.8) rotate(-90)" x="-58.2 -52.3 -46.4 -43.2 -37.3 -31.4 -28.2 -22.3 -16.5 -14.1 -8.0" y="0" font-size="9.61" fill="#1f2c33">03:19:40 PM</text>
<text transform="translate(1647.00,722.8) rotate(-90)" x="-58.2 -52.3 -46.4 -43.2 -37.3 -31.4 -28.2 -22.3 -16.5 -14.1 -8.0" y="0" font-size="9.61" fill="#1f2c33">03:19:45 PM</text>
<rect x="33.5" y="812.5" width="10" height="10" fill="#c0c070" stroke="#4a4a20" stroke-width="1"/>
<text x="49.4 58.8 66.4 76.2 83.8 87.1 94.5 102.1 109.6 113.3 119.9 127.5 134.9 142.5 150.0 154.1 158.2 165.7 170.5 174.2 181.1 185.5 193.0 200.5 204.7 209.8 219.1 227.0 238.3 246.1 251.2 255.2 262.7 266.8 270.5 276.9 283.6 291.2 298.7 306.3 311.2 314.5 321.8 326.1 331.1 342.0 348.8 360.9 367.8 375.6 380.8" y="821.80" font-size="12.36" fill="#1f2c33">Download speed for step &quot;Home&quot; of scenario &quot;MyWeb&quot;.</text>
<text x="419.1 423.4 431.0 438.0 445.9" y="821.80" font-size="12.36" fill="#1f2c33">[avg]</text>
<rect x="33.5" y="826.5" width="10" height="10" fill="#6e5af8" stroke="#20107a" stroke-width="1"/>
<text x="49.4 58.8 66.4 76.2 83.8 87.1 94.5 102.1 109.6 113.3 119.9 127.5 134.9 142.5 150.0 154.1 158.2 165.7 170.5 174.2 181.1 185.5 193.0 200.5 204.7 209.4 217.7 225.3 230.3 237.3 240.6 247.3 254.5 261.4 266.5 270.5 278.0 282.1 285.8 292.2 298.9 306.5 314.0 321.6 326.5 329.8 337.1 341.4 346.4 357.3 364.1 376.2 383.1 390.9 396.1" y="835.80" font-size="12.36" fill="#1f2c33">Download speed for step &quot;Services&quot; of scenario &quot;MyWeb&quot;.</text>
<text x="419.1 423.4 431.0 438.0 445.9" y="835.80" font-size="12.36" fill="#1f2c33">[avg]</text>
<rect x="33.5" y="840.5" width="10" height="10" fill="#85c56e" stroke="#2a4a20" stroke-width="1"/>
<text x="49.4 58.8 66.4 76.2 83.8 87.1 94.5 102.1 109.6 113.3 119.9 127.5 134.9 142.5 150.0 154.1 158.2 165.7 170.5 174.2 181.1 185.5 193.0 200.5 204.7 209.5 218.4 226.0 233.9 238.3 245.6 252.7 257.4 262.6 266.5 274.0 278.1 281.8 288.3 295.0 302.5 310.1 317.7 322.5 325.8 333.2 337.4 342.4 353.3 360.1 372.2 379.1 387.0 392.2" y="849.80" font-size="12.36" fill="#1f2c33">Download speed for step &quot;Contact&quot; of scenario &quot;MyWeb&quot;.</text>
<text x="419.1 423.4 431.0 438.0 445.9" y="849.80" font-size="12.36" fill="#1f2c33">[avg]</text>
<rect x="33.5" y="854.5" width="10" height="10" fill="#e46a6a" stroke="#5a1a1a" stroke-width="1"/>
<text x="49.4 58.8 66.4 76.2 83.8 87.1 94.5 102.1 109.6 113.3 119.9 127.5 134.9 142.5 150.0 154.1 158.2 165.7 170.5 174.2 181.1 185.5 193.0 200.5 204.7 209.8 218.3 221.7 229.2 237.1 242.2 246.2 253.7 257.8 261.5 267.9 274.6 282.2 289.7 297.3 302.2 305.5 312.8 317.1 322.1 333.0 339.8 351.9 358.8 366.6 371.8" y="863.80" font-size="12.36" fill="#1f2c33">Download speed for step &quot;Blog&quot; of scenario &quot;MyWeb&quot;.</text>
<text x="419.1 423.4 431.0 438.0 445.9" y="863.80" font-size="12.36" fill="#1f2c33">[avg]</text>
<text x="493.8 497.1 504.2 511.1" y="808.00" font-size="12.36" fill="#1f2c33">last</text>
<text x="584.6 595.9 599.3" y="808.00" font-size="12.36" fill="#1f2c33">min</text>
<text x="681.0 688.6 695.6" y="808.00" font-size="12.36" fill="#1f2c33">avg</text>
<text x="771.8 783.1 790.6" y="808.00" font-size="12.36" fill="#1f2c33">max</text>
<text x="471.8 479.5 486.9 490.9 498.5 506.0 509.4 517.5 526.1 533.4" y="821.80" font-size="12.36" fill="#1f2c33">75.01 KBps</text>
<text x="567.0 574.7 582.1 586.1 593.7 601.2 604.6 612.7 621.3 628.6" y="821.80" font-size="12.36" fill="#1f2c33">51.34 KBps</text>
<text x="663.0 670.7 678.1 682.1 689.7 697.2 700.6 708.7 717.3 724.6" y="821.80" font-size="12.36" fill="#1f2c33">63.55 KBps</text>
<text x="750.8 758.5 765.9 769.9 777.5 785.0 788.4 796.5 805.1 812.4" y="821.80" font-size="12.36" fill="#1f2c33">75.46 KBps</text>
<text x="475.6 483.3 490.9 498.5 506.0 509.4 517.5 526.1 533.4" y="835.80" font-size="12.36" fill="#1f2c33">1023 KBps</text>
<text x="559.4 567.0 574.7 582.1 586.1 593.7 601.2 604.6 612.7 621.3 628.6" y="835.80" font-size="12.36" fill="#1f2c33">594.11 KBps</text>
<text x="655.4 663.0 670.7 678.1 682.1 689.7 697.2 700.6 708.7 717.3 724.6" y="835.80" font-size="12.36" fill="#1f2c33">960.79 KBps</text>
<text x="756.0 763.4 767.4 775.1 782.5 786.2 796.5 805.1 812.4" y="835.80" font-size="12.36" fill="#1f2c33">1.27 MBps</text>
<text x="477.0 484.4 488.4 496.1 503.5 507.2 517.5 526.1 533.4" y="849.80" font-size="12.36" fill="#1f2c33">1.43 MBps</text>
<text x="559.4 567.0 574.7 582.1 586.1 593.7 601.2 604.6 612.7 621.3 628.6" y="849.80" font-size="12.36" fill="#1f2c33">941.57 KBps</text>
<text x="668.2 675.6 679.6 687.3 694.7 698.4 708.7 717.3 724.6" y="849.80" font-size="12.36" fill="#1f2c33">1.25 MBps</text>
<text x="763.6 771.1 775.1 782.5 786.2 796.5 805.1 812.4" y="849.80" font-size="12.36" fill="#1f2c33">1.5 MBps</text>
<text x="477.0 484.4 488.4 496.1 503.5 507.2 517.5 526.1 533.4" y="863.80" font-size="12.36" fill="#1f2c33">1.98 MBps</text>
<text x="572.2 579.6 583.6 591.3 598.7 602.4 612.7 621.3 628.6" y="863.80" font-size="12.36" fill="#1f2c33">1.08 MBps</text>
<text x="668.2 675.6 679.6 687.3 694.7 698.4 708.7 717.3 724.6" y="863.80" font-size="12.36" fill="#1f2c33">1.89 MBps</text>
<text x="756.0 763.4 767.4 775.1 782.5 786.2 796.5 805.1 812.4" y="863.80" font-size="12.36" fill="#1f2c33">2.27 MBps</text>
</svg>
</body></html>
